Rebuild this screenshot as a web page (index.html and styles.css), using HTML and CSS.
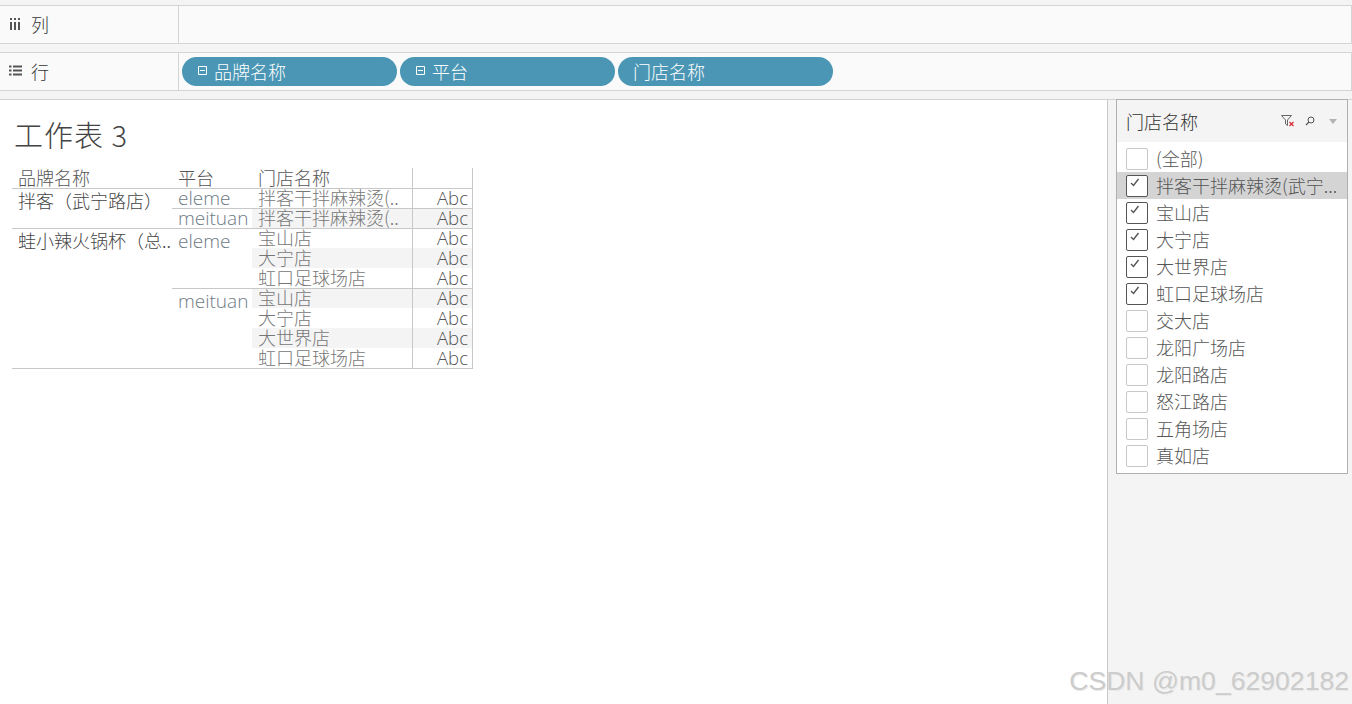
FILE: index.html
```html
<!DOCTYPE html>
<html lang="zh">
<head>
<meta charset="utf-8">
<title>工作表 3</title>
<link rel="stylesheet" href="styles.css">
</head>
<body>
<div class="shelves">
  <div class="shelf">
    <div class="shelf-label">
      <svg class="shelf-icon" width="13" height="12" viewBox="0 0 13 12"><path d="M2 0v2M6 0v2M10 0v2M2 4v8M6 4v8M10 4v8" stroke="#555" stroke-width="2" fill="none"/></svg>
      <span>列</span>
    </div>
    <div class="shelf-body"></div>
  </div>
  <div class="shelf">
    <div class="shelf-label">
      <svg class="shelf-icon" width="13" height="11" viewBox="0 0 13 11"><path d="M0 1.500h2.500M0 5.500h2.500M0 9.500h2.500M4 1.500h9M4 5.500h9M4 9.500h9" stroke="#555" stroke-width="2" fill="none"/></svg>
      <span>行</span>
    </div>
    <div class="shelf-body">
      <div class="pill"><svg class="pill-icon" width="9" height="9" viewBox="0 0 9 9"><path d="M.5.500h8v8h-8zM2 4.500h5" stroke="#fff" fill="none"/></svg><span>品牌名称</span></div>
      <div class="pill"><svg class="pill-icon" width="9" height="9" viewBox="0 0 9 9"><path d="M.5.500h8v8h-8zM2 4.500h5" stroke="#fff" fill="none"/></svg><span>平台</span></div>
      <div class="pill"><span>门店名称</span></div>
    </div>
  </div>
</div>
<div class="workspace">
  <main class="sheet">
    <h1 class="title">工作表 3</h1>
    <div class="crosstab">
      <div class="head">品牌名称</div>
      <div class="head">平台</div>
      <div class="head">门店名称</div>
      <div class="head val-col"></div>

      <div class="brand b1 line">拌客（武宁路店）</div>
      <div class="plat p1 line">eleme</div>
      <div class="store line">拌客干拌麻辣烫(..</div><div class="val line">Abc</div>
      <div class="plat p1b line">meituan</div>
      <div class="store alt line">拌客干拌麻辣烫(..</div><div class="val alt line">Abc</div>

      <div class="brand b2 line">蛙小辣火锅杯（总..</div>
      <div class="plat p2 line">eleme</div>
      <div class="store line">宝山店</div><div class="val line">Abc</div>
      <div class="store alt">大宁店</div><div class="val alt">Abc</div>
      <div class="store">虹口足球场店</div><div class="val">Abc</div>
      <div class="plat p3 line">meituan</div>
      <div class="store alt line">宝山店</div><div class="val alt line">Abc</div>
      <div class="store">大宁店</div><div class="val">Abc</div>
      <div class="store alt">大世界店</div><div class="val alt">Abc</div>
      <div class="store">虹口足球场店</div><div class="val">Abc</div>
    </div>
  </main>
  <aside class="side">
    <section class="filter">
      <header class="filter-head">
        <span class="filter-title">门店名称</span>
        <svg class="tool tool-funnel" width="14" height="12" viewBox="0 0 14 12"><path d="M.5.500h10L6.500 5v5.500L4.500 9V5z" stroke="#666" fill="none"/><path d="M8.500 7l4 4M12.500 7l-4 4" stroke="#d8262c" stroke-width="1.100" fill="none"/></svg>
        <svg class="tool tool-search" width="10" height="10" viewBox="0 0 10 10"><circle cx="6" cy="4" r="3" stroke="#555" fill="none"/><path d="M4 6L1 9" stroke="#555" stroke-width="1.200"/></svg>
        <svg class="tool tool-arrow" width="8" height="5" viewBox="0 0 8 5"><path d="M0 0h8L4 5z" fill="#b3b3b3"/></svg>
      </header>
      <ul class="filter-list">
        <li class="item"><span class="box"></span><span class="label">(全部)</span></li>
        <li class="item selected"><span class="box on"><svg width="10" height="9" viewBox="0 0 10 9"><path d="M1 5l2.500 2.500L8.500 1" stroke="#555" stroke-width="1.400" fill="none"/></svg></span><span class="label">拌客干拌麻辣烫(武宁...</span></li>
        <li class="item"><span class="box on"><svg width="10" height="9" viewBox="0 0 10 9"><path d="M1 5l2.500 2.500L8.500 1" stroke="#555" stroke-width="1.400" fill="none"/></svg></span><span class="label">宝山店</span></li>
        <li class="item"><span class="box on"><svg width="10" height="9" viewBox="0 0 10 9"><path d="M1 5l2.500 2.500L8.500 1" stroke="#555" stroke-width="1.400" fill="none"/></svg></span><span class="label">大宁店</span></li>
        <li class="item"><span class="box on"><svg width="10" height="9" viewBox="0 0 10 9"><path d="M1 5l2.500 2.500L8.500 1" stroke="#555" stroke-width="1.400" fill="none"/></svg></span><span class="label">大世界店</span></li>
        <li class="item"><span class="box on"><svg width="10" height="9" viewBox="0 0 10 9"><path d="M1 5l2.500 2.500L8.500 1" stroke="#555" stroke-width="1.400" fill="none"/></svg></span><span class="label">虹口足球场店</span></li>
        <li class="item"><span class="box"></span><span class="label">交大店</span></li>
        <li class="item"><span class="box"></span><span class="label">龙阳广场店</span></li>
        <li class="item"><span class="box"></span><span class="label">龙阳路店</span></li>
        <li class="item"><span class="box"></span><span class="label">怒江路店</span></li>
        <li class="item"><span class="box"></span><span class="label">五角场店</span></li>
        <li class="item"><span class="box"></span><span class="label">真如店</span></li>
      </ul>
    </section>
  </aside>
</div>
<div class="watermark">CSDN @m0_62902182</div>
</body>
</html>
```
FILE: styles.css
```css
* { box-sizing: border-box; }
html, body { height: 100%; }
body {
  margin: 0;
  height: 704px;
  overflow: hidden;
  background: #f4f4f4;
  color: #444;
  font-family: "Open Sans", "Noto Sans CJK SC", sans-serif;
  display: flex;
  flex-direction: column;
  position: relative;
}
.shelves {
  padding-top: 5px;
  display: flex;
  flex-direction: column;
  gap: 8px;
  height: 99px;
  flex: none;
}
.shelf {
  height: 39px;
  display: flex;
  background: #fafafa;
  border-top: 1px solid #d4d4d4;
  border-bottom: 1px solid #d4d4d4;
  border-right: 1px solid #d4d4d4;
}
.shelf-label {
  width: 179px;
  flex: none;
  display: flex;
  align-items: center;
  border-right: 1px solid #d4d4d4;
  padding: 0 0 2px 9px;
  font: 300 18px/1 "Noto Sans CJK SC", sans-serif;
  color: #333;
}
.shelf-icon { margin-right: 9px; flex: none; }
.shelf-body {
  flex: 1;
  display: flex;
  align-items: center;
  gap: 3px;
  padding-left: 3px;
}
.pill {
  width: 215px;
  height: 29px;
  border-radius: 15px;
  background: #4a96b4;
  color: #fff;
  display: flex;
  align-items: center;
  padding: 0 0 2px 15px;
  font: 300 18px/1 "Noto Sans CJK SC", sans-serif;
}
.pill-icon { margin: 0 7px 0 1px; flex: none; }
.workspace {
  flex: 1;
  display: flex;
  border-top: 1px solid #d4d4d4;
  min-height: 0;
}
.sheet {
  width: 1108px;
  flex: none;
  background: #fff;
  border-right: 1px solid #c8c8c8;
  padding: 0 0 0 12px;
}
.title {
  margin: 0;
  height: 68px;
  padding: 16px 0 0 2px;
  font: 300 29px/36px "Noto Sans CJK SC", sans-serif;
  color: #444;
  letter-spacing: 1px;
}
.crosstab {
  display: grid;
  grid-template-columns: 160px 80px 160px 61px;
  grid-template-rows: repeat(10, 20px);
  width: 461px;
  height: 201px;
  border-bottom: 1px solid #c8c8c8;
  font: 300 18px/18px "Noto Sans CJK SC", sans-serif;
}
.head { color: #555; padding-left: 6px; white-space: nowrap; }
.val-col { border-left: 1px solid #c8c8c8; border-right: 1px solid #c8c8c8; padding: 0; }
.brand { grid-column: 1; padding: 3px 0 0 6px; white-space: nowrap; color: #444; }
.b1 { grid-row: 2 / span 2; }
.b2 { grid-row: 4 / span 7; }
.plat { grid-column: 2; padding-left: 6px; color: #6c7a85; font: 300 19px/20px "Open Sans", sans-serif; white-space: nowrap; }
.p1 { grid-row: 2; }
.p1b { grid-row: 3; }
.p2 { grid-row: 4 / span 3; padding-top: 3px; }
.p3 { grid-row: 7 / span 4; padding-top: 3px; }
.store { grid-column: 3; padding-left: 6px; color: #777; white-space: nowrap; }
.val {
  grid-column: 4;
  text-align: right;
  padding-right: 4px;
  color: #555;
  font: 300 18.600px/20px "Open Sans", sans-serif;
  border-left: 1px solid #c8c8c8;
  border-right: 1px solid #c8c8c8;
}
.alt { background: #f4f4f4; }
.line { box-shadow: inset 0 1px 0 #c8c8c8; }
.side { flex: 1; padding-right: 4px; padding-left: 8px; }
.filter {
  width: 232px;
  height: 375px;
  margin-top: -1px;
  background: #fff;
  border: 1px solid #b0b0b0;
}
.filter-head {
  height: 42px;
  background: #f4f4f4;
  display: flex;
  align-items: center;
  padding: 0 10px 0 9px;
}
.filter-title {
  flex: 1;
  font: 300 18px/1 "Noto Sans CJK SC", sans-serif;
  color: #333;
}
.tool { flex: none; }
.tool-funnel { margin-right: 10px; }
.tool-search { margin-right: 14px; }
.filter-list {
  margin: 0;
  padding: 3px 0 0;
  list-style: none;
}
.item {
  height: 27px;
  display: flex;
  align-items: center;
  padding-left: 9px;
  gap: 8px;
  font: 300 18px/1 "Noto Sans CJK SC", sans-serif;
  color: #555;
  white-space: nowrap;
}
.label { margin-top: -2px; }
.selected { background: #d4d4d4; }
.box {
  width: 22px;
  height: 22px;
  border: 1px solid #c8c8c8;
  border-radius: 2px;
  background: #fff;
  flex: none;
  padding: 2px 0 0 3px;
}
.box svg { display: block; }
.box.on { border-color: #555; }
.watermark {
  position: absolute;
  right: 3px;
  bottom: 6px;
  font: 26.600px/1.200 "Liberation Sans", sans-serif;
  color: #cccccc;
  text-shadow: 1px 1px 1px #e8e8e8;
  white-space: nowrap;
}
```
